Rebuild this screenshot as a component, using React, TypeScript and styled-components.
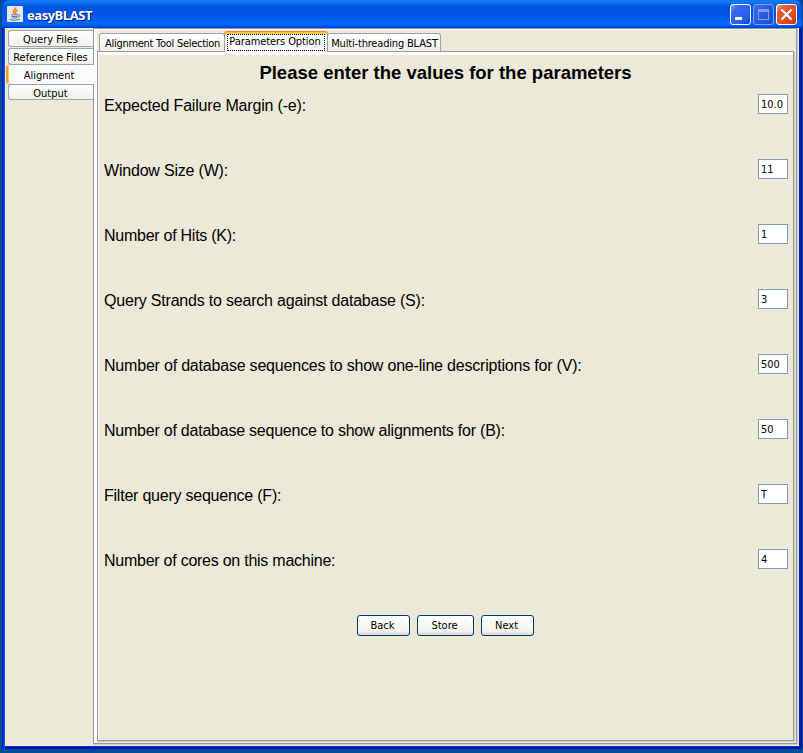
import React from "react";
import styled, { createGlobalStyle, css } from "styled-components";

const Global = createGlobalStyle`
  *, *::before, *::after { box-sizing: border-box; }
  body { margin: 0; overflow: hidden; background: #004e98; }
  button, input { margin: 0; border-radius: 0; }
`;

const uiFont = css`
  font-family: "DejaVu Sans Condensed", "DejaVu Sans", sans-serif;
  font-stretch: condensed;
  font-size: 11px;
  color: #000;
`;

const Desktop = styled.div`
  width: 803px;
  height: 753px;
  padding: 0 1px 4px 2px;
  background: #004e98;
`;

const Window = styled.div`
  width: 800px;
  height: 749px;
  display: flex;
  flex-direction: column;
  padding: 0 3px 3px;
  background: #0831d9;
  border-radius: 7px 7px 0 0;
  overflow: hidden;
  box-shadow: inset 1px 0 #0019cf, inset 2px 0 #0831d9, inset 3px 0 #0855e8, inset -1px 0 #00138c, inset 0 -2px #0010a8, inset -3px 0 #001ec0;
`;

const TitleBar = styled.header`
  flex: 0 0 28px;
  margin: 0 -3px;
  padding: 0 4px 0 5px;
  display: flex;
  align-items: center;
  background: linear-gradient(#0878f8 0, #1878f4 2px, #0566ed 4px, #0054e3 7px, #0055e5 15px, #0266ff 22px, #0262f8 25px, #0046d4 27px, #003dd7 28px);
`;

const AppIcon = styled.svg`
  width: 16px;
  height: 16px;
  margin-top: -1px;
`;

const Title = styled.h1`
  flex: 1;
  margin: 2px 0 0 4px;
  font: bold 13px "Open Sans", "Noto Sans", sans-serif;
  letter-spacing: -0.45px;
  color: #fff;
  text-shadow: 1px 1px 1px #0a1883;
`;

const Controls = styled.div`
  display: flex;
  gap: 2px;
  margin-right: 1px;
`;

const Control = styled.button<{ $kind: "min" | "max" | "close" }>`
  width: 21px;
  height: 21px;
  padding: 0;
  border: 1px solid ${(p) => (p.$kind === "max" ? "#7c9eed" : "#fff")};
  border-radius: 3px;
  background: ${(p) =>
    p.$kind === "close"
      ? "linear-gradient(135deg, #f0a080 0, #e55a32 25%, #e04a20 70%, #bf3810 100%)"
      : p.$kind === "max"
        ? "linear-gradient(135deg, #3e6de0, #2555da 60%, #1c4bd0)"
        : "linear-gradient(135deg, #7ea0f4 0, #3568e8 25%, #2762f4 70%, #1540c0 100%)"};
  svg { display: block; width: 19px; height: 19px; }
`;

const Client = styled.main`
  flex: 1;
  min-height: 0;
  display: flex;
  background: #ece9d8;
`;

const SideTabs = styled.nav`
  flex: 0 0 88px;
  padding-top: 2px;
`;

const SideTab = styled.div<{ $active?: boolean; $height: number }>`
  ${uiFont}
  line-height: 15px;
  height: ${(p) => p.$height}px;
  margin-left: ${(p) => (p.$active ? 1 : 3)}px;
  margin-right: ${(p) => (p.$active ? -1 : 0)}px;
  padding: 1px 1px 0 0;
  text-align: center;
  white-space: nowrap;
  border: 1px solid #91a7b4;
  border-right: 0;
  border-radius: 3px 0 0 3px;
  background: linear-gradient(#fff, #f1f0e9);
  margin-bottom: 1px;
  ${(p) => p.$active && css`
    position: relative;
    z-index: 1;
    margin-top: -1px;
    margin-bottom: 0;
    padding: 3px 4px 0 0;
    border-width: 0 0 0 2px;
    border-color: #f3a027;
    background: #fcfcfe;
    box-shadow: inset 1px 0 #ffc73c;
  `}
`;

const OuterPanel = styled.section`
  flex: 1;
  min-width: 0;
  margin: 0 2px 2px 0;
  display: flex;
  flex-direction: column;
  padding: 1px 1px 1px 3px;
  border: 1px solid #919b9c;
  background: linear-gradient(90deg, #fcfcfe 3px, #ece9d8 3px);
  box-shadow: 1px 1px #d0cebf, inset 0 1px #fcfcfe;
`;

const TopTabs = styled.nav`
  display: flex;
  align-items: flex-end;
  height: 21px;
  padding-left: 2px;
`;

const TopTab = styled.div<{ $active?: boolean; $width: number; $tracking: number }>`
  ${uiFont}
  width: ${(p) => p.$width}px;
  letter-spacing: ${(p) => p.$tracking}px;
  height: 18px;
  display: flex;
  align-items: center;
  justify-content: center;
  white-space: nowrap;
  padding: 1px 0 0 1px;
  border: 1px solid #91a7b4;
  border-bottom: 0;
  border-radius: 3px 3px 0 0;
  background: linear-gradient(#fff, #f1f0e9);
  ${(p) => p.$active && css`
    position: relative;
    z-index: 1;
    height: 20px;
    margin: 0 -1px -1px;
    padding: 0 2px 1px;
    border-color: #919b9c;
    border-top: 2px solid #ffc73c;
    background: #fcfcfe;
    box-shadow: 0 -1px #e68b2c;
  `}
`;

const FocusLabel = styled.span`
  width: 98px;
  height: 17px;
  padding: 0 2px 2px 0;
  border: 1px dotted #000;
  display: flex;
  align-items: center;
  justify-content: center;
`;

const Form = styled.form`
  flex: 1;
  min-height: 0;
  border: 1px solid #919b9c;
  box-shadow: inset 1px 0 #fcfcfe, inset 0 3px #fcfcfe, 1px 1px #d0cebf;
  margin-right: 1px;
  margin-bottom: 1px;
  padding: 10px 5px 0 6px;
`;

const Heading = styled.h2`
  margin: 0;
  padding-right: 1px;
  height: 23px;
  font: bold 18.5px/22px "Liberation Sans", Arial, sans-serif;
  text-align: center;
  color: #000;
`;

const Row = styled.label<{ $tracking: number }>`
  height: 65px;
  display: flex;
  justify-content: space-between;
  align-items: flex-start;
  padding-top: 9px;
  font: 16px/24px "Liberation Sans", Arial, sans-serif;
  letter-spacing: ${(p) => p.$tracking}px;
  color: #000;
`;

const Field = styled.input`
  ${uiFont}
  width: 30px;
  height: 20px;
  padding: 1px 0 0 2px;
  border: 1px solid #7f9db9;
  background: #fff;
  outline: 0;
`;

const Actions = styled.div`
  display: flex;
  justify-content: center;
  gap: 7px;
  padding: 10px 2px 0 0;
`;

const Action = styled.button<{ $width: number }>`
  ${uiFont}
  width: ${(p) => p.$width}px;
  height: 21px;
  padding: 0 1px 1px 0;
  border: 1px solid #003c74;
  border-radius: 3px;
  background: linear-gradient(#fff, #f4f3ee 80%, #dcd8cf);
`;

const rows = [
  { label: "Expected Failure Margin (-e):", value: "10.0", tracking: -0.18 },
  { label: "Window Size (W):", value: "11", tracking: -0.2 },
  { label: "Number of Hits (K):", value: "1", tracking: -0.26 },
  { label: "Query Strands to search against database (S):", value: "3", tracking: -0.2 },
  { label: "Number of database sequences to show one-line descriptions for (V):", value: "500", tracking: -0.2 },
  { label: "Number of database sequence to show alignments for (B):", value: "50", tracking: -0.23 },
  { label: "Filter query sequence (F):", value: "T", tracking: -0.23 },
  { label: "Number of cores on this machine:", value: "4", tracking: -0.25 },
];

export default function App() {
  return (
    <Desktop>
      <Global />
      <Window>
        <TitleBar>
          <AppIcon viewBox="0 0 16 16">
            <rect width="16" height="16" rx="1" fill="#e9e7e2" />
            <path d="M8.5 1.5c1 1.800-3.500 3-2 5.200l1 1.300M10.500 4c-2 1-2.500 2-1.300 3.800" fill="none" stroke="#e87924" strokeWidth="1.500" />
            <path d="M4 8.800h7M4.500 10.500h6M5 12h5M11 9c3-.5 2.500 2-.5 2.300M2.500 13.300c3 1.500 8 1 10.500-.2" fill="none" stroke="#5482a1" strokeWidth="1" />
          </AppIcon>
          <Title>easyBLAST</Title>
          <Controls>
            <Control $kind="min" type="button" aria-label="Minimize">
              <svg viewBox="0 0 19 19"><path d="M4 12h7v3H4z" fill="#fff" /></svg>
            </Control>
            <Control $kind="max" type="button" aria-label="Maximize">
              <svg viewBox="0 0 19 19"><path d="M4 4h11v11H4zM5 7v7h9V7z" fill="#7c9eed" fillRule="evenodd" /></svg>
            </Control>
            <Control $kind="close" type="button" aria-label="Close">
              <svg viewBox="0 0 19 19"><path d="M4.500 4.500l10 10M14.500 4.500l-10 10" stroke="#fff" strokeWidth="2.200" /></svg>
            </Control>
          </Controls>
        </TitleBar>
        <Client>
          <SideTabs>
            <SideTab $height={17}>Query Files</SideTab>
            <SideTab $height={17}>Reference Files</SideTab>
            <SideTab $active $height={19}>Alignment</SideTab>
            <SideTab $height={16}>Output</SideTab>
          </SideTabs>
          <OuterPanel>
            <TopTabs>
              <TopTab $width={126} $tracking={-0.27}>Alignment Tool Selection</TopTab>
              <TopTab $active $width={104} $tracking={-0.08}><FocusLabel>Parameters Option</FocusLabel></TopTab>
              <TopTab $width={114} $tracking={-0.18}>Multi-threading BLAST</TopTab>
            </TopTabs>
            <Form>
              <Heading>Please enter the values for the parameters</Heading>
              {rows.map(({ label, value, tracking }) => (
                <Row key={label} $tracking={tracking}>
                  {label}
                  <Field defaultValue={value} />
                </Row>
              ))}
              <Actions>
                <Action type="button" $width={53}>Back</Action>
                <Action type="button" $width={57}>Store</Action>
                <Action type="button" $width={53}>Next</Action>
              </Actions>
            </Form>
          </OuterPanel>
        </Client>
      </Window>
    </Desktop>
  );
}
